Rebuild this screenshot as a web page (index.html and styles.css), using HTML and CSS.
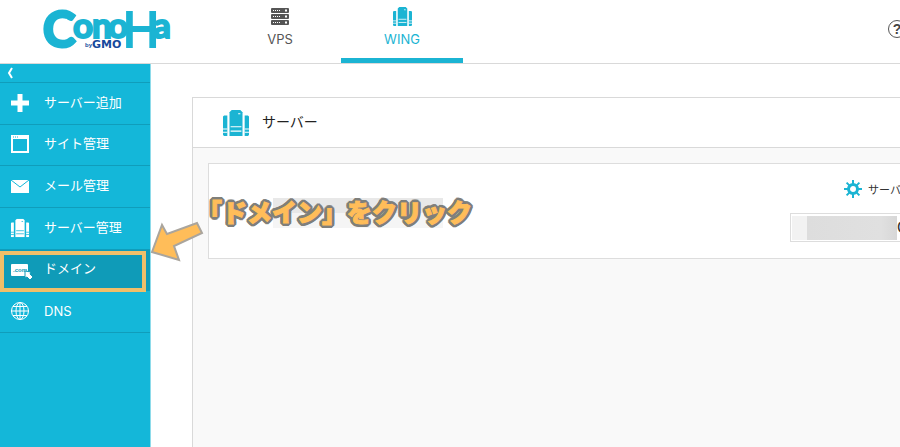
FILE: index.html
```html
<!DOCTYPE html>
<html lang="ja">
<head>
<meta charset="utf-8">
<title>ConoHa WING</title>
<link rel="stylesheet" href="styles.css">
</head>
<body>
<svg class="defs" aria-hidden="true">
  <symbol id="servers" viewBox="0 0 24 24">
    <path d="M8 0h8l2 2v22H6V2z"/>
    <path d="M1 5h3v19H1l-1-1V6zM20 5h3l1 1v17l-1 1h-3z"/>
    <path class="cut" d="M7 15.500h10M7 19.500h10M0 17.500h4M0 20.500h4M20 17.500h4M20 20.500h4M14 3.500h2"/>
  </symbol>
</svg>
<header class="header">
  <a class="logo" href="#" aria-label="ConoHa by GMO">
    <svg width="132" height="44" viewBox="0 0 132 44">
      <g class="logo-name">
        <text class="logo-big" x="0" y="37">C</text>
        <text class="logo-small" x="30" y="28">o</text>
        <text class="logo-small" x="49" y="28">n</text>
        <text class="logo-small" x="65" y="28">o</text>
        <text class="logo-tall" x="80" y="37">H</text>
        <text class="logo-small" x="110" y="28">a</text>
      </g>
      <text class="logo-by" x="42" y="37">by</text>
      <text class="logo-gmo" x="49" y="38">GMO</text>
    </svg>
  </a>
  <nav class="tabs">
    <a class="tab" href="#">
      <svg width="20" height="20" viewBox="0 0 20 20">
        <rect x="1" y="1" width="18" height="5" rx="1"/><rect x="1" y="7" width="18" height="5" rx="1"/><rect x="1" y="13" width="18" height="5" rx="1"/>
        <path class="rack" d="M3 3.500h7M3 9.500h7M3 15.500h7"/><path class="lamp" d="M15 3.500h2M15 9.500h2M15 15.500h2"/>
      </svg>
      <span>VPS</span>
    </a>
    <a class="tab tab-active" href="#">
      <svg width="19" height="19"><use href="#servers"/></svg>
      <span>WING</span>
    </a>
  </nav>
  <button class="help" type="button" aria-label="ヘルプ">?</button>
</header>
<div class="layout">
  <aside class="sidebar">
    <button class="collapse" type="button" aria-label="メニューを閉じる"><svg width="6" height="10" viewBox="0 0 6 10"><path d="M5 0L2 5l3 5" /></svg></button>
    <nav class="menu">
      <a class="item" href="#"><svg width="20" height="20" viewBox="0 0 20 20"><path d="M7.500 1h5v6.500H19v5h-6.500V19h-5v-6.500H1v-5h6.500z"/></svg><span>サーバー追加</span></a>
      <a class="item" href="#"><svg width="20" height="20" viewBox="0 0 20 20"><path fill-rule="evenodd" d="M1 1h18v18H1zM3 5v12h14V5z"/><path class="dots" d="M3 3h5"/></svg><span>サイト管理</span></a>
      <a class="item" href="#"><svg width="20" height="20" viewBox="0 0 20 20"><path d="M1 4h18v13H1z"/><path class="cut" d="M1 4l9 7 9-7"/></svg><span>メール管理</span></a>
      <a class="item" href="#"><svg width="20" height="20" viewBox="-1 -1 26 26"><use href="#servers" width="24" height="24"/></svg><span>サーバー管理</span></a>
      <a class="item item-active" href="#"><svg class="domain" width="22" height="20" viewBox="0 0 22 20"><rect x="1" y="5" width="17" height="12" rx="1"/><text x="3" y="13">.com</text><path class="pointer" d="M15 12l6 1-1 2 3 3-3 3-3-3-2 1z"/></svg><span>ドメイン</span></a>
      <a class="item" href="#"><svg class="globe" width="20" height="20" viewBox="0 0 20 20"><circle cx="10" cy="10" r="8.500"/><ellipse cx="10" cy="10" rx="4" ry="8.500"/><path d="M10 1v18M1 10h18M3 5.500h14M3 14.500h14"/></svg><span class="latin">DNS</span></a>
    </nav>
    <div class="highlight"></div>
  </aside>
  <main class="main">
    <section class="panel">
      <h1 class="panel-title"><svg width="26" height="26"><use href="#servers"/></svg><span>サーバー</span></h1>
      <div class="panel-body">
        <div class="card">
          <div class="masked"></div>
          <div class="settings">
            <a class="setting-link" href="#"><svg width="18" height="18" viewBox="0 0 18 18"><circle cx="9" cy="9" r="4.500"/><path d="M9 0v4M9 14v4M0 9h4M14 9h4M2.600 2.600l3 3M12.400 12.400l3 3M2.600 15.400l3-3M12.400 5.600l3-3"/></svg><span>サーバー</span></a>
            <div class="value"><span class="value-mask"></span>C</div>
          </div>
        </div>
      </div>
    </section>
  </main>
</div>
<div class="callout">「ドメイン」をクリック</div>
<svg class="arrow" width="60" height="46" viewBox="0 0 60 46"><path d="M4 32L14 5l5 9 30-11 5 10-28 13 5 14z"/></svg>
</body>
</html>
```
FILE: styles.css
```css
* { box-sizing: border-box; }
body {
  margin: 0;
  min-height: 100vh;
  display: flex;
  flex-direction: column;
  overflow: hidden;
  position: relative;
  background: #fff;
  color: #333;
  font-family: "Liberation Sans", "Noto Sans CJK JP", sans-serif;
}
a { color: inherit; text-decoration: none; }
button { border: 0; padding: 0; background: none; font: inherit; color: inherit; }
svg { display: block; flex: none; fill: currentColor; overflow: visible; }
.defs { position: absolute; width: 0; height: 0; }
.cut { fill: none; stroke: var(--back, #fff); stroke-width: 1; }

.header { display: flex; height: 64px; border-bottom: 1px solid #d9d9d9; }
.logo { width: 219px; padding: 10px 0 0 43px; }
.logo-name { fill: #1bb4d3; stroke: #1bb4d3; font-family: Lato, sans-serif; font-weight: 700; }
.logo-big { font-size: 49px; stroke-width: 3px; }
.logo-tall { font-size: 50px; stroke-width: 2px; font-family: "Liberation Sans", sans-serif; font-weight: 400; }
.logo-small { font-size: 35px; stroke-width: 2px; }
.logo-by, .logo-gmo { fill: #164a9c; font-weight: bold; }
.logo-by { font-size: 6px; }
.logo-gmo { font-family: "DejaVu Sans", sans-serif; font-size: 11px; }
.tabs { display: flex; }
.tab {
  width: 122px;
  display: flex;
  flex-direction: column;
  align-items: center;
  justify-content: space-between;
  padding: 7px 0 10px;
  border-bottom: 5px solid transparent;
  color: #555;
  font: 13px/18px Inter, sans-serif;
}
.tab-active { color: #1bb4d3; border-color: #1bb4d3; }
.rack, .lamp { stroke: #fff; stroke-width: 2; }
.rack { stroke-width: 1; stroke-dasharray: 1 1; }
.help {
  width: 18px;
  height: 18px;
  margin: 20px -6px 0 auto;
  border: 1px solid #555;
  border-radius: 50%;
  color: #444;
  font-size: 14px;
  line-height: 16px;
  font-weight: bold;
}

.layout { display: flex; flex: 1; }
.sidebar { position: relative; width: 151px; flex: none; background: #14b7d9; color: #fff; border-right: 1px solid #8edbea; }
.collapse { display: block; width: 100%; height: 19px; padding-left: 7px; border-bottom: 1px solid #109dbb; }
.collapse path { fill: none; stroke: #fff; stroke-width: 2; }
.menu { display: grid; grid-template-rows: repeat(6, 1fr); height: 250px; }
.item {
  --back: #14b7d9;
  display: grid;
  grid-template-columns: 20px 1fr;
  align-items: center;
  gap: 14px;
  padding: 0 0 1px 10px;
  border-bottom: 1px solid #109dbb;
  font-family: "Noto Sans CJK JP", sans-serif;
  font-size: 13px;
  line-height: 20px;
}
.item span { padding-bottom: 2px; }
.item .latin { padding: 0; font: 13px/20px Inter, sans-serif; }
.item-active { background: #0f9bb8; }
.dots { stroke: #14b7d9; stroke-width: 1; stroke-dasharray: 1 1; }
.domain text { fill: #0f9bb8; font: bold 6px "Liberation Sans", sans-serif; }
.pointer { stroke: #0f9bb8; stroke-width: 1; }
.globe { fill: none; stroke: #fff; stroke-width: 1; }
.highlight { position: absolute; left: 0; top: 187px; width: 146px; height: 41px; border: 4px solid #f0bf69; }

.main { flex: 1; min-width: 0; padding: 33px 0 0 41px; display: flex; }
.panel { flex: 1; min-width: 0; border: solid #d9d9d9; border-width: 1px 0 0 1px; background: #f9f9f9; }
.panel-title {
  display: flex;
  align-items: center;
  gap: 13px;
  height: 50px;
  margin: 0;
  padding-left: 30px;
  border-bottom: 1px solid #d9d9d9;
  background: #fff;
  color: #222;
  font-size: 14px;
  line-height: 20px;
  font-weight: 400;
}
.panel-title svg, .setting-link svg { color: #1bb4d3; }
.panel-title span { padding-bottom: 2px; }
.panel-body { padding: 15px 0 0 15px; }
.card { display: flex; justify-content: space-between; height: 96px; border: solid #ddd; border-width: 1px 0 1px 1px; background: #fff; }
.masked { width: 170px; height: 30px; margin: 34px 0 0 64px; background: linear-gradient(#e8e8e8 50%, #f5f5f5 50%); }
.settings { width: 110px; padding-top: 16px; overflow: hidden; }
.setting-link { display: flex; align-items: center; gap: 6px; height: 18px; margin-left: 54px; font-size: 11px; white-space: nowrap; }
.setting-link path { stroke: currentColor; stroke-width: 2; }
.setting-link circle { fill: none; stroke: currentColor; stroke-width: 3; }
.value { display: flex; align-items: center; height: 29px; margin-top: 15px; padding-left: 1px; border: solid #ddd; border-width: 1px 0 1px 1px; background: #fff; font-size: 16px; white-space: nowrap; }
.value-mask { flex: none; width: 105px; height: 24px; background: linear-gradient(90deg, #f2f2f2 14%, #ddd 14%, #e0e0e0 85%, #d7d7d7); }

.callout {
  position: absolute;
  left: 197px;
  top: 193px;
  color: #ffbd59;
  font: 900 25px/36px "Noto Sans CJK JP", sans-serif;
  -webkit-text-stroke: 1px #ffbd59;
  text-shadow:
    3px 0 #7f7f7b, -3px 0 #7f7f7b, 0 3px #7f7f7b, 0 -3px #7f7f7b,
    2px 2px #7f7f7b, -2px 2px #7f7f7b, 2px -2px #7f7f7b, -2px -2px #7f7f7b,
    3px 1px #7f7f7b, -3px 1px #7f7f7b, 3px -1px #7f7f7b, -3px -1px #7f7f7b,
    1px 3px #7f7f7b, -1px 3px #7f7f7b, 1px -3px #7f7f7b, -1px -3px #7f7f7b;
  white-space: nowrap;
}
.arrow { position: absolute; left: 148px; top: 220px; fill: #ffbd59; stroke: #aaa59d; stroke-width: 2; }
```
